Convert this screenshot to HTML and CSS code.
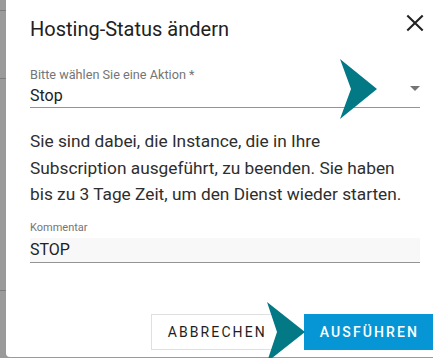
FILE: index.html
```html
<!DOCTYPE html>
<html lang="de">
<head>
<meta charset="utf-8">
<title>Hosting-Status ändern</title>
<link rel="stylesheet" href="styles.css">
</head>
<body>
<div class="screen">
  <div class="backdrop">
    <div class="bd-row r1"></div>
    <div class="bd-row r2"></div>
    <div class="bd-row r3"></div>
  </div>
  <div class="dialog">
    <div class="header">
      <h2 class="title">Hosting-Status ändern</h2>
      <button class="close" aria-label="Schließen">
        <svg width="24" height="24" viewBox="0 0 24 24"><path d="M4.3 4.5 L19.7 19.5 M19.7 4.5 L4.3 19.5" stroke="#222" stroke-width="2.1" fill="none"/></svg>
      </button>
    </div>
    <div class="field select-field">
      <div class="label">Bitte wählen Sie eine Aktion *</div>
      <div class="select-row">
        <span class="value">Stop</span>
        <span class="caret"></span>
      </div>
    </div>
    <p class="text">Sie sind dabei, die Instance, die in Ihre<br>Subscription ausgeführt, zu beenden. Sie haben bis zu 3 Tage Zeit, um den Dienst wieder starten.</p>
    <div class="field comment-field">
      <div class="label small">Kommentar</div>
      <div class="input">STOP</div>
    </div>
    <div class="actions">
      <button class="btn btn-outline">ABBRECHEN</button>
      <button class="btn btn-primary">AUSFÜHREN</button>
    </div>
  </div>
  <svg class="arrows" width="433" height="358" viewBox="0 0 433 358">
    <polygon points="340,59 377,89 340,119 351,89" fill="#037985"/>
    <polygon points="267,302 305,332 267,362 277,332" fill="#037985"/>
  </svg>
</div>
</body>
</html>
```
FILE: styles.css
```css
* { box-sizing: border-box; }
html, body { margin: 0; padding: 0; }
body {
  width: 433px;
  height: 358px;
  overflow: hidden;
  background: #9a9a9a;
  font-family: Roboto, "Liberation Sans", Arial, sans-serif;
}
.screen {
  position: relative;
  display: flex;
  width: 433px;
  height: 358px;
  overflow: hidden;
}
.backdrop {
  flex: none;
  width: 6px;
  display: flex;
  flex-direction: column;
}
.bd-row { border-bottom: 1px solid #7c7c7c; }
.r1 { height: 11px; }
.r2 { height: 68px; }
.r3 { height: 212px; }
.dialog {
  flex: none;
  width: 438px;
  height: 357px;
  background: #fff;
  border-bottom-left-radius: 4px;
  display: flex;
  flex-direction: column;
}
.header {
  display: flex;
  justify-content: space-between;
  align-items: flex-start;
  padding: 11px 17px 0 24px;
}
.title {
  margin: 6px 0 0 0;
  font-size: 20px;
  line-height: 24px;
  font-weight: 400;
  color: #212121;
}
.close {
  width: 24px;
  height: 24px;
  padding: 0;
  border: 0;
  background: none;
  display: block;
}
.close svg { display: block; }
.field { padding: 0 24px; }
.label {
  font-size: 12.7px;
  line-height: 14px;
  color: #757575;
}
.label.small {
  font-size: 11px;
  line-height: 13px;
}
.select-field { margin-top: 27px; }
.select-row {
  margin-top: 4px;
  display: flex;
  align-items: flex-start;
  padding-bottom: 1px;
  border-bottom: 1px solid #949494;
}
.value {
  flex: 1;
  font-size: 16px;
  line-height: 20px;
  color: #212121;
}
.caret {
  width: 0;
  height: 0;
  border-left: 5px solid transparent;
  border-right: 5px solid transparent;
  border-top: 5px solid #757575;
}
.text {
  margin: 20px 0 0 0;
  padding: 0 24px;
  font-size: 17.3px;
  line-height: 26.6px;
  color: #2e2e2e;
}
.comment-field { margin-top: 13px; }
.input {
  margin-top: 4px;
  height: 25px;
  padding: 2px 0 0 0;
  font-size: 16px;
  line-height: 20px;
  color: #212121;
  background: #f8f8f8;
  border-bottom: 1px solid #949494;
}
.actions {
  margin-top: auto;
  display: flex;
  justify-content: flex-end;
  gap: 21px;
  padding: 0 10px 7px 0;
}
.btn {
  height: 36px;
  padding: 0 15px 0 16px;
  font-family: inherit;
  font-size: 14px;
  font-weight: 500;
  letter-spacing: 2.1px;
  border-radius: 0;
  cursor: pointer;
}
.btn-outline {
  background: #fff;
  color: #1e1e1e;
  border: 1px solid #e0e0e0;
  font-weight: 400;
}
.btn-primary {
  background: #0796d5;
  color: #fff;
  border: 0;
}
.arrows {
  position: absolute;
  left: 0;
  top: 0;
  pointer-events: none;
}
```
